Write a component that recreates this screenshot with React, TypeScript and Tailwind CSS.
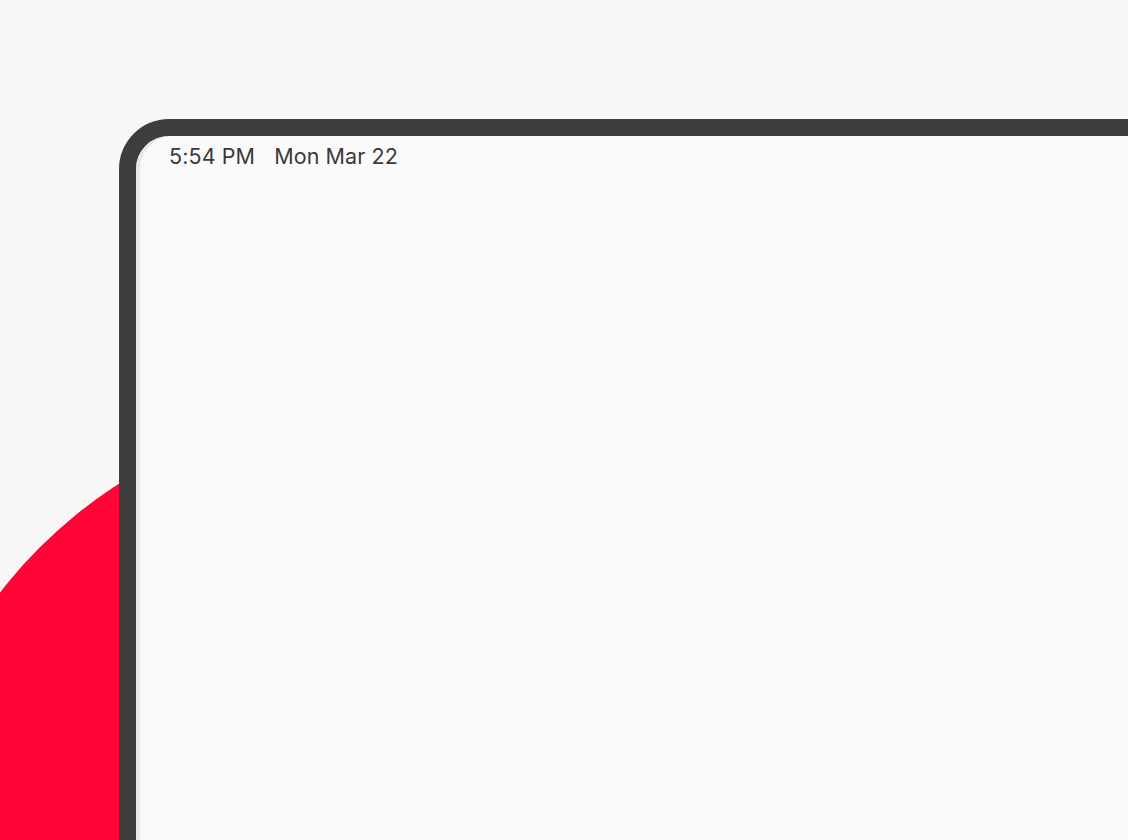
export default function App() {
  return (
    <div className="relative h-[840px] w-full overflow-hidden bg-[#f7f7f7] pl-[119px] pt-[119px]">
      {/* red blob behind the device */}
      <div className="absolute left-[-101px] top-[407px] h-[960px] w-[960px] rounded-full bg-[#ff0537]" />

      {/* device frame */}
      <div className="relative h-[800px] w-[1100px] rounded-tl-[50px] bg-[#3d3d3d] pl-[17px] pt-[17px]">
        <div className="h-full w-full rounded-tl-[33px] bg-[#fafafa] shadow-[inset_4px_0_0_#e6e8eb]">
          <div
            className="flex gap-[19px] pl-[33px] pt-[8px] text-[21.5px] leading-[24px] tracking-[0.1px] text-[#3a3a3a]"
            style={{ fontFamily: "Inter, 'Noto Sans', sans-serif" }}
          >
            <span>5:54 PM</span>
            <span>Mon Mar 22</span>
          </div>
        </div>
      </div>
    </div>
  );
}
